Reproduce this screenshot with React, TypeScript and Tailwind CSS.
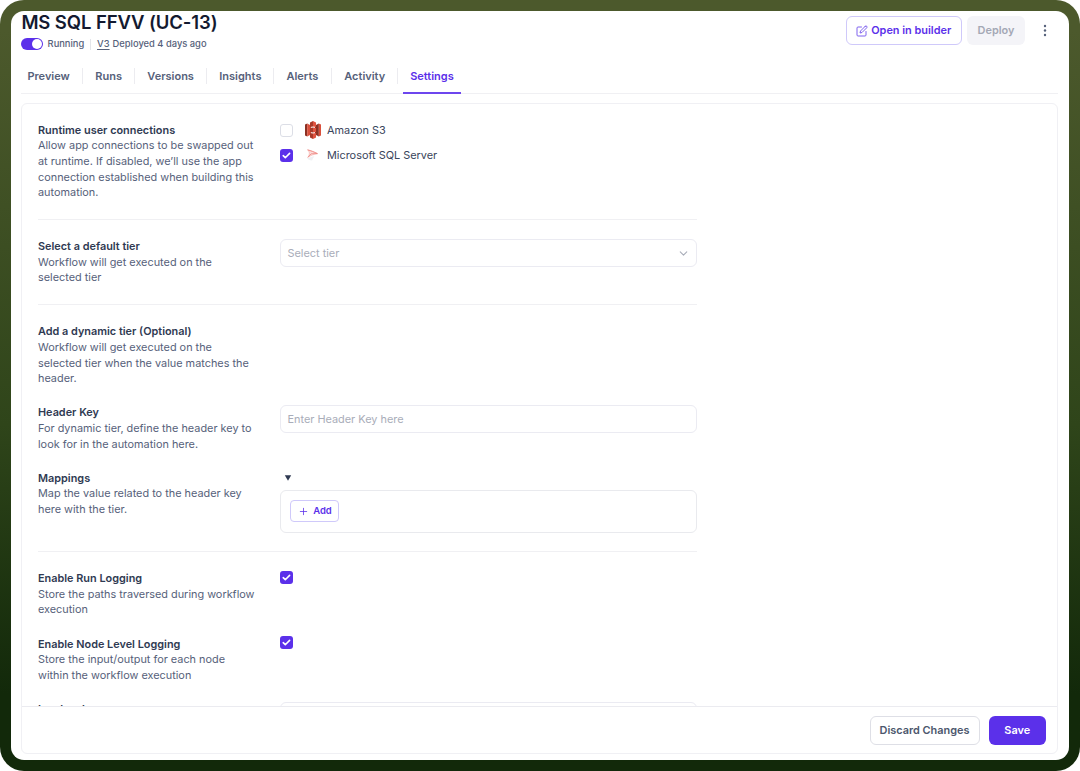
import type { ReactNode } from 'react';
import { Plus, ChevronDown } from 'lucide-react';
import { FiEdit } from 'react-icons/fi';

const tabs = [
  { label: 'Preview', cls: 'w-[61.4px] pl-[6px]' },
  { label: 'Runs', cls: 'w-[52px] pl-[12.5px]' },
  { label: 'Versions', cls: 'w-[72px] pl-[12.5px]' },
  { label: 'Insights', cls: 'w-[67px] pl-[12.5px]' },
  { label: 'Alerts', cls: 'w-[58px] pl-[12.7px]' },
  { label: 'Activity', cls: 'w-[66px] pl-[12.5px]' },
];

function Check({ on }: { on?: boolean }) {
  return on ? (
    <span className="flex h-[13px] w-[13px] shrink-0 items-center justify-center rounded-[3px] bg-[#5b30ea]">
      <svg viewBox="0 0 13 13" className="h-[13px] w-[13px]" fill="none" stroke="white" strokeWidth="1.6" strokeLinecap="round" strokeLinejoin="round">
        <path d="M3.2 6.7 5.3 8.7 9.6 4.4" />
      </svg>
    </span>
  ) : (
    <span className="h-[13px] w-[13px] shrink-0 rounded-[3px] border border-[#dcdee6] bg-white" />
  );
}

function Row({ title, lines, children }: { title: string; lines: string[]; children?: ReactNode }) {
  return (
    <div className="flex w-[659.5px]">
      <div className="-mb-[0.4px] w-[242.5px] shrink-0 whitespace-nowrap pt-[0.4px] text-[10.88px] leading-[15.6px] text-[#56617a]">
        <div className="font-semibold text-[#2f3a52]">{title}</div>
        {lines.map((l) => (
          <div key={l}>{l}</div>
        ))}
      </div>
      <div className="h-0 flex-1">{children}</div>
    </div>
  );
}

const Divider = () => <div className="h-px w-[659.5px] shrink-0 bg-[#f0f0f3]" />;

function S3Icon() {
  return (
    <svg viewBox="0 0 18 18" className="h-[18px] w-[18px]">
      <path d="M1 3.6 3.2 2.6V15.4L1 14.4Z" fill="#8c3123" />
      <path d="M3.2 2.6 7 4.4V13.6L3.2 15.4Z" fill="#d9503c" />
      <path d="M17 3.6 14.8 2.6V15.4L17 14.4Z" fill="#d9503c" />
      <path d="M14.8 2.6 11 4.4V13.6L14.8 15.4Z" fill="#8c3123" />
      <path d="M6 1.5 9 0V5.4L6 6ZM6 16.5 9 18V12.6L6 12ZM6 6.9 9 6.5V11.5L6 11.1Z" fill="#a83a2a" />
      <path d="M12 1.5 9 0V5.4L12 6ZM12 16.5 9 18V12.6L12 12ZM12 6.9 9 6.5V11.5L12 11.1Z" fill="#e0533f" />
    </svg>
  );
}

function SqlIcon() {
  return (
    <svg viewBox="0 0 18 18" className="h-[18px] w-[18px]" fill="none" strokeLinejoin="round" strokeLinecap="round">
      <path d="M4 4C7 4.6 10 6 13.4 7.6C10 8.2 6.8 9.4 4 11.2C5.6 8.6 6 6.6 4 4Z" fill="#fbdcda" stroke="#f5a9a5" strokeWidth=".6" />
      <path d="M4 4C7 4.6 10 6 13.4 7.6L7.2 7.8 4 11.2" stroke="#ee8580" strokeWidth=".8" />
      <path d="M3.2 12.6C5 11.4 7.5 10.6 10.5 10.2C9 11.8 8.4 13 8.4 14.3C6.6 14.6 4.2 14 3.2 12.6Z" fill="#eff0f3" />
    </svg>
  );
}

export default function App() {
  return (
    <div className="h-[771px] w-[1080px] overflow-hidden bg-white font-['Inter',sans-serif]">
      <div className="h-full rounded-[24px] bg-linear-to-b from-[#4c592c] from-[4%] via-[#2f451a] via-[55%] to-[#12290a] to-[90%] p-[11px]">
        <div className="flex h-[749px] flex-col rounded-[13px] bg-white pr-[11px] pb-[6px] pl-[10.4px]">
          <header className="flex h-[50px] shrink-0 justify-between">
            <div>
              <h1 className="-mt-[1px] text-[18.5px] font-semibold leading-[24px] tracking-[-0.1px] text-[#131a30]">MS SQL FFVV (UC-13)</h1>
              <div className="mt-[2.5px] flex h-[15px] items-center text-[9.35px] font-medium text-[#56617a]">
                <span className="flex h-[12px] w-[22px] items-center justify-end rounded-full bg-[#5b30ea] pr-[1px]">
                  <span className="h-[10px] w-[10px] rounded-full bg-white" />
                </span>
                <span className="ml-[4.2px] w-[37px] whitespace-nowrap">Running</span>
                <span className="ml-[5.5px] h-[11px] w-px bg-[#e3e5ea]" />
                <span className="ml-[6px] underline underline-offset-[2px]">V3</span>
                <span className="ml-[3px] whitespace-nowrap">Deployed 4 days ago</span>
              </div>
            </div>
            <div className="flex items-start pt-[5px] text-[11px] font-semibold">
              <button className="flex h-[29px] w-[116.5px] items-center justify-center gap-[3px] rounded-[6px] border border-[#cfc9fa] text-[#5b30ea]">
                <FiEdit size={12} className="text-[#7f62ee]" />
                <span className="whitespace-nowrap text-[10.9px]">Open in builder</span>
              </button>
              <button className="ml-[5px] h-[29px] w-[58px] rounded-[6px] bg-[#f4f4f8] text-[10.9px] text-[#a4a8b5]">Deploy</button>
              <svg viewBox="0 0 4 14" className="mr-[11.5px] ml-[17.5px] mt-[8px] h-[14px] w-[4px]" fill="#56617a">
                <circle cx="2" cy="2" r="1.2" />
                <circle cx="2" cy="6.5" r="1.2" />
                <circle cx="2" cy="11" r="1.2" />
              </svg>
            </div>
          </header>
          <nav className="flex h-[32.6px] shrink-0 items-start border-b border-[#f0f0f3] text-[11px] font-semibold leading-[16px] text-[#56617a]">
            {tabs.map((t) => (
              <div key={t.label} className={`mt-[7px] h-[16px] shrink-0 whitespace-nowrap border-r border-[#ececf0] ${t.cls}`}>
                {t.label}
              </div>
            ))}
            <div className="ml-[5.2px] h-[32.6px] w-[58px] border-b-2 border-[#6d46ee] pt-[7px] text-center text-[#5b30ea]">Settings</div>
          </nav>
          <main className="mt-[9.4px] flex min-h-0 flex-1 flex-col rounded-[6px] border border-[#f0f0f4]">
            <div className="flex min-h-0 flex-1 flex-col gap-[18.68px] overflow-hidden pt-[18.5px] pl-[15.6px] [&>*]:shrink-0">
              <Row
                title="Runtime user connections"
                lines={['Allow app connections to be swapped out', 'at runtime. If disabled, we’ll use the app', 'connection established when building this', 'automation.']}
              >
                <div className="-mt-[1.1px] flex flex-col gap-[7px] text-[10.9px] text-[#3a455c]">
                  <div className="flex h-[18px] items-center">
                    <Check />
                    <span className="ml-[11px] flex w-[22.5px]"><S3Icon /></span>Amazon S3
                  </div>
                  <div className="flex h-[18px] items-center">
                    <Check on />
                    <span className="ml-[11px] flex w-[22.5px]"><SqlIcon /></span>Microsoft SQL Server
                  </div>
                </div>
              </Row>
              <Divider />
              <Row title="Select a default tier" lines={['Workflow will get executed on the', 'selected tier']}>
                <div className="flex h-[28.5px] items-center justify-between rounded-[6px] border border-[#ebebf2] pr-[6px] pl-[6px] text-[10.9px] text-[#a9adb9]">
                  Select tier
                  <ChevronDown size={13} strokeWidth={2} />
                </div>
              </Row>
              <Divider />
              <Row
                title="Add a dynamic tier (Optional)"
                lines={['Workflow will get executed on the', 'selected tier when the value matches the', 'header.']}
              />
              <Row title="Header Key" lines={['For dynamic tier, define the header key to', 'look for in the automation here.']}>
                <div className="flex h-[28.5px] items-center rounded-[6px] border border-[#ebebf2] pl-[6px] text-[10.9px] text-[#a9adb9]">Enter Header Key here</div>
              </Row>
              <div className="h-[62px]">
                <Row title="Mappings" lines={['Map the value related to the header key', 'here with the tier.']}>
                  <svg viewBox="0 0 8 6" className="mt-[4.6px] ml-[4px] h-[6px] w-[8px]" fill="#2f3a52">
                    <path d="M.8 .3H7.2L4 5.7Z" />
                  </svg>
                  <div className="mt-[9px] flex h-[42.5px] items-center rounded-[6px] border border-[#e9eaee] pl-[9px]">
                    <button className="flex h-[22px] w-[48.5px] items-center justify-center gap-[4.5px] rounded-[4px] border border-[#cfc9fa] text-[9.5px] font-semibold text-[#5b30ea]">
                      <Plus size={11} strokeWidth={1.7} />
                      Add
                    </button>
                  </div>
                </Row>
              </div>
              <Divider />
              <Row title="Enable Run Logging" lines={['Store the paths traversed during workflow', 'execution']}>
                <Check on />
              </Row>
              <Row title="Enable Node Level Logging" lines={['Store the input/output for each node', 'within the workflow execution']}>
                <Check on />
              </Row>
              <Row title="Log level" lines={[]}>
                <div className="h-[28.5px] rounded-[6px] border border-[#ebebf2]" />
              </Row>
            </div>
            <footer className="flex h-[47px] shrink-0 items-start justify-end border-t border-[#ebebf0] pt-[9px] pr-[11.5px] text-[10.9px] font-semibold">
              <button className="h-[28.5px] w-[110px] whitespace-nowrap rounded-[6px] border border-[#dedfe6] text-[#4c576d]">Discard Changes</button>
              <button className="ml-[9.5px] h-[28.5px] w-[56.5px] rounded-[6px] bg-[#5b30ea] text-white">Save</button>
            </footer>
          </main>
        </div>
      </div>
    </div>
  );
}
